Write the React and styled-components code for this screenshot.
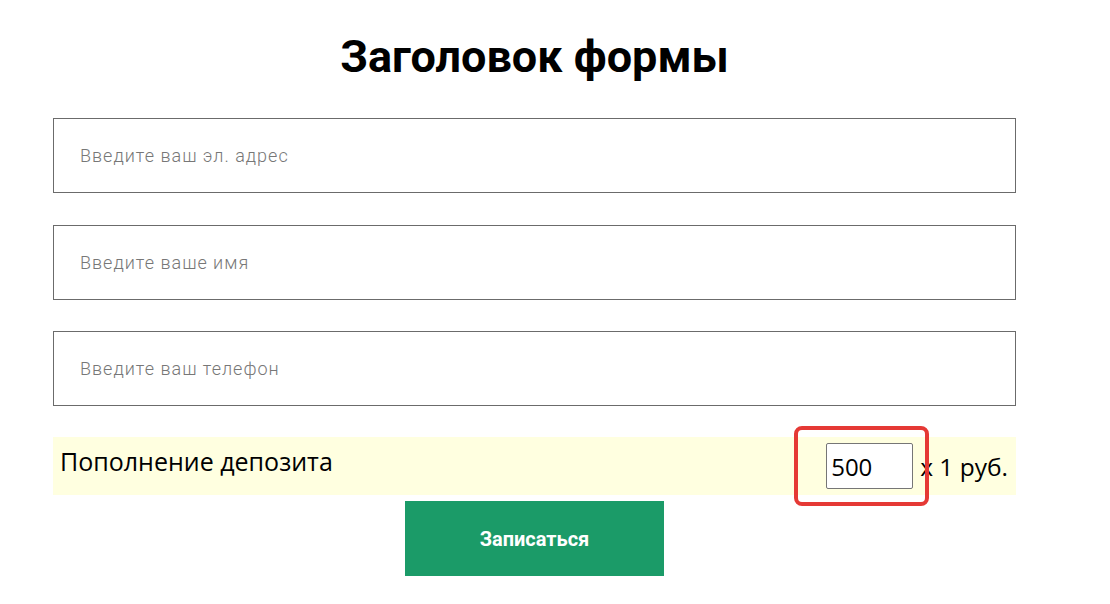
import React from "react"
import styled, { createGlobalStyle } from "styled-components"

const GlobalStyle = createGlobalStyle`
  body {
    margin: 0;
    background: #fff;
    font-family: "Open Sans", sans-serif;
  }
`

const Page = styled.div`
  padding-left: 53px;
`

const Form = styled.form`
  width: 963px;
  display: flex;
  flex-direction: column;
`

const Title = styled.h1`
  margin: 31px 0 35px;
  font-family: Roboto, sans-serif;
  font-weight: 700;
  font-size: 45px;
  line-height: 52px;
  text-align: center;
  color: #000;
`

const Field = styled.input`
  box-sizing: border-box;
  height: 75px;
  width: 100%;
  margin-bottom: ${(p) => p.$gap}px;
  padding: 0 26px;
  border: 1px solid #6b6b6b;
  font-family: Roboto, sans-serif;
  font-weight: 300;
  font-size: 18px;
  letter-spacing: 1px;
  color: #333;
  outline: none;

  &::placeholder {
    color: #777;
  }
`

const DepositRow = styled.div`
  box-sizing: border-box;
  height: 58px;
  display: flex;
  align-items: center;
  justify-content: space-between;
  padding: 0 8px 0 7px;
  background: #ffffe0;
  margin-bottom: 6px;
`

const Label = styled.span`
  align-self: flex-start;
  padding-top: 7px;
  font-size: 25px;
  line-height: 34px;
  color: #000;
`

const Amount = styled.div`
  display: flex;
  align-items: center;
  gap: 7px;
  font-size: 24.5px;
  color: #000;
`

const Highlight = styled.div`
  position: relative;
  display: flex;

  &::after {
    content: "";
    position: absolute;
    left: -32px;
    top: -17px;
    width: 135px;
    height: 80px;
    box-sizing: border-box;
    border: 4px solid #e53935;
    border-radius: 8px;
    pointer-events: none;
  }
`

const NumberInput = styled.input`
  box-sizing: border-box;
  width: 87px;
  height: 46px;
  padding: 0 4px;
  border: 1px solid #767676;
  border-radius: 2px;
  font-family: "Open Sans", sans-serif;
  font-size: 24px;
  color: #000;
  background: #fff;
  outline: none;
`

const Submit = styled.button`
  align-self: center;
  width: 259px;
  height: 75px;
  border: none;
  background: #1b9b68;
  color: #fff;
  font-family: Roboto, sans-serif;
  font-weight: 700;
  font-size: 20px;
  cursor: pointer;
`

export default function App() {
  return (
    <Page>
      <GlobalStyle />
      <Form onSubmit={(e) => e.preventDefault()}>
        <Title>Заголовок формы</Title>
        <Field type="email" placeholder="Введите ваш эл. адрес" $gap={32} />
        <Field type="text" placeholder="Введите ваше имя" $gap={31} />
        <Field type="tel" placeholder="Введите ваш телефон" $gap={31} />
        <DepositRow>
          <Label>Пополнение депозита</Label>
          <Amount>
            <Highlight>
              <NumberInput type="text" defaultValue="500" />
            </Highlight>
            <span>x 1 руб.</span>
          </Amount>
        </DepositRow>
        <Submit type="submit">Записаться</Submit>
      </Form>
    </Page>
  )
}
